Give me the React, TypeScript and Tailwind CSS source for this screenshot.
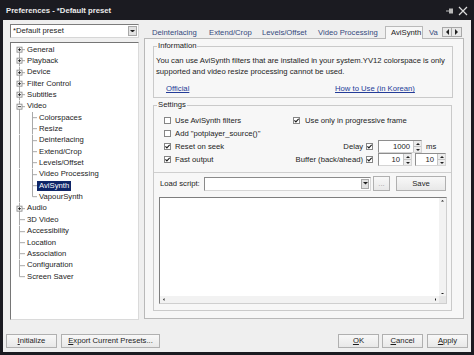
import React from "react";

type Row = {
  label: string;
  kind: "root" | "child";
  exp?: "+" | "-";
  first?: boolean;
  last?: boolean;
  sel?: boolean;
};

const tree: Row[] = [
  { label: "General", kind: "root", exp: "+", first: true },
  { label: "Playback", kind: "root", exp: "+" },
  { label: "Device", kind: "root", exp: "+" },
  { label: "Filter Control", kind: "root", exp: "+" },
  { label: "Subtitles", kind: "root", exp: "+" },
  { label: "Video", kind: "root", exp: "-" },
  { label: "Colorspaces", kind: "child" },
  { label: "Resize", kind: "child" },
  { label: "Deinterlacing", kind: "child" },
  { label: "Extend/Crop", kind: "child" },
  { label: "Levels/Offset", kind: "child" },
  { label: "Video Processing", kind: "child" },
  { label: "AviSynth", kind: "child", sel: true },
  { label: "VapourSynth", kind: "child", last: true },
  { label: "Audio", kind: "root", exp: "+" },
  { label: "3D Video", kind: "root" },
  { label: "Accessibility", kind: "root" },
  { label: "Location", kind: "root" },
  { label: "Association", kind: "root" },
  { label: "Configuration", kind: "root" },
  { label: "Screen Saver", kind: "root", last: true },
];

const H = 11.35;
const MID = H / 2;
const LINE = "#a8a8a8";

// tree connector lines + expander box, one svg per row
function Connector({ row }: { row: Row }) {
  const w = row.kind === "root" ? 14 : 26;
  return (
    <svg width={w} height={H} viewBox={`0 0 ${w} ${H}`} className="shrink-0">
      {row.kind === "root" ? (
        <>
          <line x1={8.5} y1={row.first ? MID : 0} x2={8.5} y2={row.last ? MID : H} stroke={LINE} />
          <line x1={8.5} y1={MID} x2={14} y2={MID} stroke={LINE} />
          {row.exp && (
            <>
              <rect x={6} y={MID - 2.5} width={5} height={5} fill="#fff" stroke="#8c8c8c" strokeWidth={0.9} />
              <line x1={7} y1={MID} x2={10} y2={MID} stroke="#222" strokeWidth={0.9} />
              {row.exp === "+" && <line x1={8.5} y1={MID - 1.5} x2={8.5} y2={MID + 1.5} stroke="#222" strokeWidth={0.9} />}
            </>
          )}
        </>
      ) : (
        <>
          <line x1={8.5} y1={0} x2={8.5} y2={H} stroke={LINE} />
          <line x1={21.5} y1={0} x2={21.5} y2={row.last ? MID : H} stroke={LINE} />
          <line x1={21.5} y1={MID} x2={26} y2={MID} stroke={LINE} />
        </>
      )}
    </svg>
  );
}

function Check({ on }: { on?: boolean }) {
  return (
    <span className="flex h-[7px] w-[7px] shrink-0 items-center justify-center border border-[#858585] bg-white">
      {on && (
        <svg width="5" height="5" viewBox="0 0 5 5">
          <path d="M0.4 2.3 L1.9 3.9 L4.7 0.8" fill="none" stroke="#1a1a1a" strokeWidth="1.2" />
        </svg>
      )}
    </span>
  );
}

function Arrow({ dir, size = 3 }: { dir: "up" | "down" | "left" | "right"; size?: number }) {
  const d = {
    up: "M0 3 L3 0 L6 3 Z",
    down: "M0 0 L6 0 L3 3 Z",
    left: "M3 0 L3 6 L0 3 Z",
    right: "M0 0 L3 3 L0 6 Z",
  }[dir];
  const vert = dir === "up" || dir === "down";
  return (
    <svg width={vert ? size * 2 : size} height={vert ? size : size * 2} viewBox={vert ? "0 0 6 3" : "0 0 3 6"}>
      <path d={d} fill="#202020" />
    </svg>
  );
}

function Spin({ value, w }: { value: string; w: string }) {
  return (
    <div className={`flex h-[13px] ${w} border border-[#8e8e8e] border-b-[#d4d4d4] border-r-[#d4d4d4] bg-white`}>
      <span className="flex-1 pr-[3px] text-right leading-[11px]">{value}</span>
      <div className="flex w-[8px] flex-col border-l border-[#c4c4c4] bg-[#ececec]">
        <span className="flex flex-1 items-center justify-center border-b border-[#c4c4c4]">
          <Arrow dir="up" size={2} />
        </span>
        <span className="flex flex-1 items-center justify-center">
          <Arrow dir="down" size={2} />
        </span>
      </div>
    </div>
  );
}

function Btn({ children, w, dim }: { children: React.ReactNode; w: string; dim?: boolean }) {
  return (
    <div
      className={`flex ${w} items-center justify-center border border-[#b0b0b0] bg-linear-to-b from-[#f8f8f8] to-[#e8e8e8] ${
        dim ? "text-[#a0a0a0]" : "text-[#1e1e1e]"
      }`}
    >
      {children}
    </div>
  );
}

const tabs = [
  { label: "Deinterlacing", w: "w-[57px]" },
  { label: "Extend/Crop", w: "w-[53px]" },
  { label: "Levels/Offset", w: "w-[56px]" },
  { label: "Video Processing", w: "w-[73px]" },
];

export default function App() {
  return (
    <div className="flex h-[355px] w-[474px] flex-col overflow-hidden bg-[#1b1b21] font-['Liberation_Sans',Arial,sans-serif] text-[7.7px] text-[#1c1c1c]">
      {/* title bar */}
      <div className="flex h-[20px] shrink-0 items-center justify-between pl-[6px] pr-[6px] pt-[2px]">
        <span className="text-[7.7px] font-bold text-[#ececec]">Preferences - *Default preset</span>
        <div className="flex items-center gap-[4px]">
          <svg width="8" height="6" viewBox="0 0 8 6">
            <line x1="0" y1="3" x2="3" y2="3" stroke="#b8b8b8" />
            <rect x="3" y="0.5" width="4" height="5" fill="#b8b8b8" />
          </svg>
          <svg width="10" height="10" viewBox="0 0 10 10">
            <path d="M1 1 L9 9 M9 1 L1 9" stroke="#dcdcdc" strokeWidth="1.2" />
          </svg>
        </div>
      </div>

      {/* window body */}
      <div className="mx-[3px] mb-[3px] flex flex-1 flex-col bg-[#efefef]">
        <div className="flex pl-[7px] pt-[4px]">
          {/* left column */}
          <div className="flex w-[129px] flex-col">
            <div className="flex h-[14px] items-center border border-[#7c7c7c] border-b-[#d6d6d6] border-r-[#d6d6d6] bg-white">
              <span className="flex-1 pl-[2px]">*Default preset</span>
              <span className="mr-[1px] flex h-[10px] w-[9px] items-center justify-center border border-[#a8a8a8] bg-[#e2e2e2]">
                <Arrow dir="down" size={2.5} />
              </span>
            </div>
            <div className="mt-[4px] flex h-[278px] flex-col border border-[#767676] border-b-[#dadada] border-r-[#dadada] bg-white pt-[1px]">
              {tree.map((r) => (
                <div key={r.label} className="flex h-[11.35px] items-center">
                  <Connector row={r} />
                  <span
                    className={`whitespace-nowrap px-[2px] leading-[10px] ${
                      r.sel ? "bg-[#0f2668] text-white" : ""
                    }`}
                  >
                    {r.label}
                  </span>
                </div>
              ))}
            </div>
          </div>

          {/* right column: tabs + page */}
          <div className="ml-[5px] flex w-[320px] flex-col">
            <div className="flex h-[14px] items-end pl-[2px]">
              {tabs.map((t) => (
                <div key={t.label} className={`flex h-[11px] ${t.w} items-center whitespace-nowrap pl-[6px] text-[#35497c]`}>
                  {t.label}
                </div>
              ))}
              <div className="relative z-10 -mb-[1px] flex h-[13px] w-[38px] items-center border border-b-0 border-[#b9b9b9] bg-[#f7f7f7] pl-[5px]">
                AviSynth
              </div>
              <div className="flex h-[11px] w-[19px] items-center overflow-hidden pl-[6px] text-[#35497c]">Va</div>
              <div className="mb-[1px] flex h-[10px]">
                <span className="flex w-[10px] items-center justify-center border border-[#a8a8a8] bg-[#e8e8e8]">
                  <Arrow dir="left" size={3} />
                </span>
                <span className="flex w-[10px] items-center justify-center border border-l-0 border-[#a8a8a8] bg-[#e8e8e8]">
                  <Arrow dir="right" size={3} />
                </span>
              </div>
            </div>

            <div className="flex h-[281px] flex-col border border-[#b9b9b9] bg-[#f7f7f7] pl-[8px] pt-[3px]">
              {/* Information */}
              <fieldset className="w-[300px] border border-[#cacaca] pb-[3px]">
                <legend className="ml-[3px] px-[1px] leading-[8px]">Information</legend>
                <p className="mt-[6px] whitespace-nowrap pl-[2px] leading-[10.5px]">
                  You can use AviSynth filters that are installed in your system.YV12 colorspace is only
                  <br />
                  supported and video resize processing cannot be used.
                </p>
                <div className="mt-[7px] flex h-[10px] items-center pl-[12px] text-[#243c98]">
                  <span className="w-[169px] underline">Official</span>
                  <span className="underline">How to Use (in Korean)</span>
                </div>
              </fieldset>

              {/* Settings */}
              <fieldset className="mt-[3px] w-[299px] border border-[#cacaca] pb-[6px]">
                <legend className="ml-[3px] px-[1px] leading-[8px]">Settings</legend>
                <div className="mt-[5px] flex flex-col pl-[10px]">
                  <div className="flex h-[13px] items-center">
                    <div className="flex w-[129px] items-center gap-[4px]">
                      <Check />
                      <span>Use AviSynth filters</span>
                    </div>
                    <Check on />
                    <span className="ml-[5px]">Use only in progressive frame</span>
                  </div>
                  <div className="flex h-[13px] items-center gap-[4px]">
                    <Check />
                    <span>Add "potplayer_source()"</span>
                  </div>
                  <div className="flex h-[13px] items-center">
                    <div className="flex w-[129px] items-center gap-[4px]">
                      <Check on />
                      <span>Reset on seek</span>
                    </div>
                    <span className="w-[70px] text-right">Delay</span>
                    <span className="ml-[3px]">
                      <Check on />
                    </span>
                    <div className="ml-[5px]">
                      <Spin value="1000" w="w-[44px]" />
                    </div>
                    <span className="ml-[4px]">ms</span>
                  </div>
                  <div className="flex h-[13px] items-center">
                    <div className="flex w-[129px] items-center gap-[4px]">
                      <Check on />
                      <span>Fast output</span>
                    </div>
                    <span className="w-[70px] whitespace-nowrap text-right">Buffer (back/ahead)</span>
                    <span className="ml-[3px]">
                      <Check on />
                    </span>
                    <div className="ml-[5px]">
                      <Spin value="10" w="w-[34px]" />
                    </div>
                    <div className="ml-[3px]">
                      <Spin value="10" w="w-[31px]" />
                    </div>
                  </div>
                </div>

                <div className="mt-[6px] border-t border-[#cfcfcf]" />

                <div className="mt-[3px] flex h-[15px] items-center pl-[6px]">
                  <span className="w-[44px] whitespace-nowrap">Load script:</span>
                  <div className="flex h-[14px] w-[167px] items-center justify-end border border-[#8a8a8a] border-b-[#d6d6d6] border-r-[#d6d6d6] bg-white pr-[1px]">
                    <span className="flex h-[10px] w-[8px] items-center justify-center border border-[#a8a8a8] bg-[#e2e2e2]">
                      <Arrow dir="down" size={2.5} />
                    </span>
                  </div>
                  <div className="ml-[2px] flex h-[15px]">
                    <Btn w="w-[17px]" dim>
                      ...
                    </Btn>
                  </div>
                  <div className="ml-[6px] flex h-[15px]">
                    <Btn w="w-[50px]">Save</Btn>
                  </div>
                </div>

                <div className="ml-[5px] mt-[6px] flex h-[107px] w-[288px] flex-col border border-[#7e7e7e] border-b-[#cfcfcf] border-r-[#cfcfcf] bg-white">
                  <div className="flex flex-1">
                    <div className="flex-1" />
                    <div className="flex w-[7px] flex-col items-center justify-between bg-[#f2f2f2] py-[2px]">
                      <Arrow dir="up" size={1.5} />
                      <Arrow dir="down" size={1.5} />
                    </div>
                  </div>
                  <div className="flex h-[7px]">
                    <div className="flex flex-1 items-center justify-between bg-[#f2f2f2] px-[3px]">
                      <Arrow dir="left" size={1.5} />
                      <Arrow dir="right" size={1.5} />
                    </div>
                    <div className="w-[7px] bg-[#e6e6e6]" />
                  </div>
                </div>
              </fieldset>
            </div>
          </div>
        </div>

        {/* bottom buttons */}
        <div className="mb-[4px] mt-auto flex h-[14px] px-[3px]">
          <Btn w="w-[51px]">
            <span>
              <span className="underline">I</span>nitialize
            </span>
          </Btn>
          <div className="ml-[4px] flex">
            <Btn w="w-[99px]">
              <span>
                <span className="underline">E</span>xport Current Presets...
              </span>
            </Btn>
          </div>
          <div className="ml-auto flex gap-[3px]">
            <Btn w="w-[41px]">
              <span>
                <span className="underline">O</span>K
              </span>
            </Btn>
            <Btn w="w-[41px]">
              <span>
                <span className="underline">C</span>ancel
              </span>
            </Btn>
            <div className="ml-[1px] flex">
              <Btn w="w-[41px]">
                <span>
                  <span className="underline">A</span>pply
                </span>
              </Btn>
            </div>
          </div>
        </div>
      </div>
    </div>
  );
}
